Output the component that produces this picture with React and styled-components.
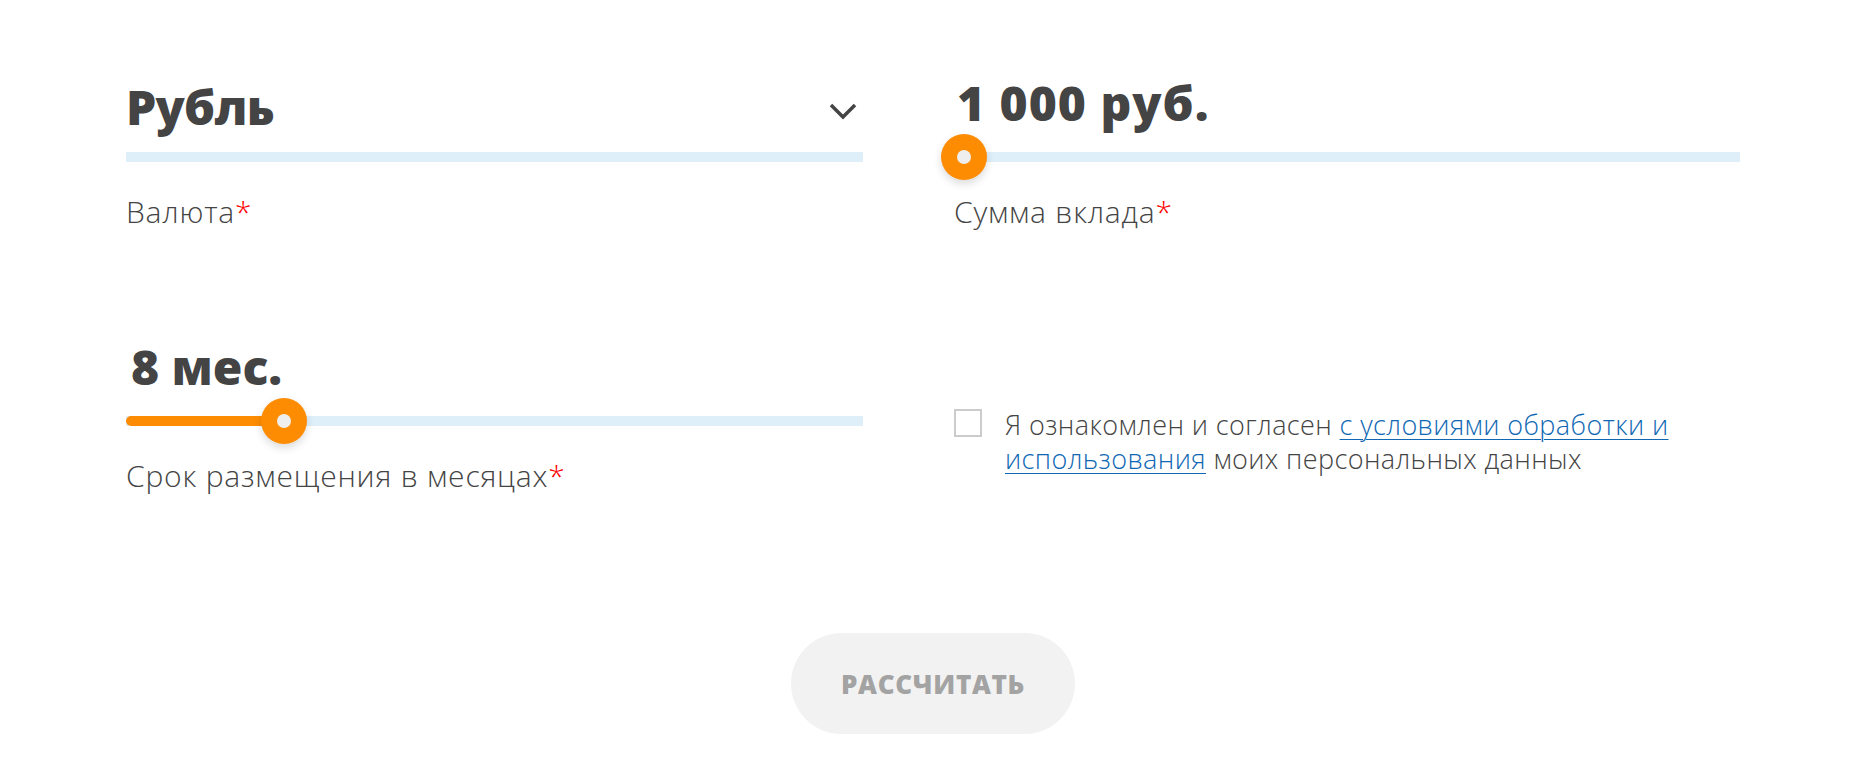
import styled, { createGlobalStyle } from "styled-components";

const GlobalStyle = createGlobalStyle`
  body {
    margin: 0;
    background: #fff;
    font-family: "Open Sans", "Noto Sans", sans-serif;
    color: #444;
  }
`;

const Container = styled.div`
  padding: 73px 120px 0 126px;
`;

const Grid = styled.div`
  display: grid;
  grid-template-columns: 737px 786px;
  column-gap: 91px;
  row-gap: 105px;
`;

const Field = styled.div`
  display: flex;
  flex-direction: column;
  position: relative;
`;

const SelectRow = styled.div`
  display: flex;
  justify-content: space-between;
  align-items: flex-start;
  padding-top: 4px;
  margin-bottom: 15px;
  cursor: pointer;
`;

const Value = styled.div`
  font-size: 48px;
  font-weight: 800;
  line-height: 60px;
  height: 60px;
  color: #444;
  padding-left: ${(p) => p.$indent || 0}px;
  letter-spacing: ${(p) => p.$tracking || 0}px;
`;

const SliderValue = styled(Value)`
  margin-bottom: 19px;
`;

const Chevron = styled.svg`
  margin-top: 26px;
  margin-right: 6px;
`;

const Track = styled.div`
  position: relative;
  height: 10px;
  background: #dfeff9;
`;

const Fill = styled.div`
  position: absolute;
  left: 0;
  top: 0;
  height: 10px;
  background: #fd8c02;
  border-radius: 5px 0 0 5px;
`;

const Thumb = styled.div`
  position: absolute;
  top: 50%;
  width: 46px;
  height: 46px;
  margin-left: -23px;
  margin-top: -23px;
  border-radius: 50%;
  background: #fd8c02;
  box-shadow: 0 4px 8px rgba(0, 0, 0, 0.14);
  display: flex;
  align-items: center;
  justify-content: center;
  cursor: grab;

  &::after {
    content: "";
    width: 14px;
    height: 14px;
    border-radius: 50%;
    background: #eeeeee;
  }
`;

const Label = styled.div`
  margin-top: 30px;
  font-size: 30px;
  font-weight: 300;
  line-height: 40px;
  letter-spacing: 0.8px;
  color: #444;
`;

const Req = styled.span`
  color: #f00;
`;

const Agree = styled.label`
  display: flex;
  align-items: flex-start;
  gap: 23px;
  padding-top: 72px;
`;

const Box = styled.span`
  flex: none;
  width: 24px;
  height: 24px;
  border: 2px solid #cccccc;
  background: #fff;
`;

const AgreeText = styled.div`
  margin-top: -1px;
  font-size: 27px;
  font-weight: 300;
  line-height: 34px;
  letter-spacing: 0.4px;
  color: #444;

  a {
    color: #1068b4;
    text-decoration: underline;
    text-underline-offset: 4px;
    text-decoration-thickness: 1px;
  }
`;

const Actions = styled.div`
  display: flex;
  justify-content: center;
  padding-top: 137px;
`;

const Button = styled.button`
  width: 284px;
  height: 101px;
  border: none;
  border-radius: 51px;
  background: #f2f2f2;
  color: #a3a3a3;
  font-family: "Open Sans", sans-serif;
  font-size: 26px;
  font-weight: 800;
  letter-spacing: 0.7px;
  cursor: default;
`;

function Slider({ value, min, max }) {
  const pct = (value - min) / (max - min);
  const pos = `calc(10px + ${pct} * (100% - 20px))`;
  return (
    <Track>
      <Fill style={{ width: pos }} />
      <Thumb style={{ left: pos }} />
    </Track>
  );
}

function App() {
  return (
    <>
      <GlobalStyle />
      <Container>
        <Grid>
          <Field>
            <SelectRow>
              <Value $tracking={-0.8}>Рубль</Value>
              <Chevron width="28" height="17" viewBox="0 0 28 17">
                <polyline
                  points="2,2 14,14 26,2"
                  fill="none"
                  stroke="#444"
                  strokeWidth="3.5"
                />
              </Chevron>
            </SelectRow>
            <Track />
            <Label>
              Валюта<Req>*</Req>
            </Label>
          </Field>

          <Field>
            <SliderValue $indent={3} $tracking={1}>1 000 руб.</SliderValue>
            <Slider value={1000} min={1000} max={10000000} />
            <Label>
              Сумма вклада<Req>*</Req>
            </Label>
          </Field>

          <Field>
            <SliderValue $indent={5}>8 мес.</SliderValue>
            <Slider value={8} min={1} max={35} />
            <Label>
              Срок размещения в месяцах<Req>*</Req>
            </Label>
          </Field>

          <Agree>
            <Box />
            <AgreeText>
              Я ознакомлен и согласен <a href="#">с условиями обработки и использования</a> моих
              персональных данных
            </AgreeText>
          </Agree>
        </Grid>

        <Actions>
          <Button>РАССЧИТАТЬ</Button>
        </Actions>
      </Container>
    </>
  );
}

export default App;
